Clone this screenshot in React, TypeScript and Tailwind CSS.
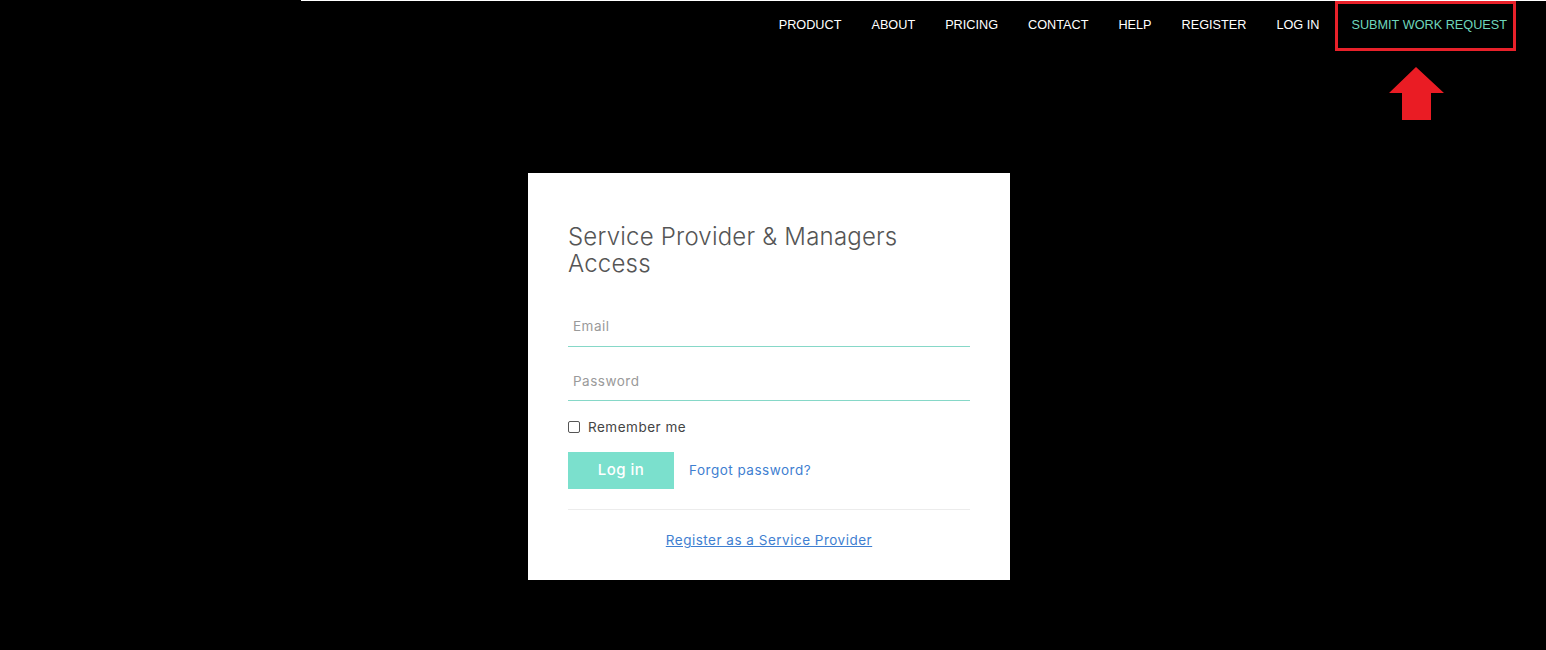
import React from "react";

export default function App() {
  const nav = ["PRODUCT", "ABOUT", "PRICING", "CONTACT", "HELP", "REGISTER", "LOG IN"];
  return (
    <div className="relative w-[1546px] h-[650px] bg-black overflow-hidden" style={{ fontFamily: "Inter, 'Open Sans', sans-serif" }}>
      <div className="ml-[301px] h-px bg-white" />
      <header className="flex justify-end items-start h-[50px] pr-[30px]" style={{ fontFamily: "'Liberation Sans', Arial, sans-serif" }}>
        <nav className="flex items-center gap-[30px] text-[12.7px] text-white">
          {nav.map((n) => (
            <a key={n} className="leading-none -mt-[1px]">{n}</a>
          ))}
          <a className="-ml-[14px] flex items-center h-[50px] border-[3px] border-[#e8212a] pl-[13px] pr-[6px] pb-[1px] text-[#6fd6bb] leading-none">
            SUBMIT WORK REQUEST
          </a>
        </nav>
      </header>
      <svg className="absolute left-[1389px] top-[67px]" width="56" height="54" viewBox="0 0 56 54">
        <polygon points="27,0 55,26 42,26 42,53 13,53 13,26 0,26" fill="#ea1c24" />
      </svg>

      <div className="flex justify-center mt-[122px]">
        <div className="w-[482px] h-[407px] bg-white ml-[-8px] px-[40px] pt-[50px]">
          <h1 className="text-[24px] leading-[27px] font-light text-[#555] tracking-[0.2px]">
            Service Provider &amp; Managers<br />Access
          </h1>
          <div className="text-[13.5px] tracking-[0.5px]">
            <div className="mt-[41px] border-b border-[#86d8c8] leading-[16px] pb-[12px] pl-[5px] text-[#9a9a9a]">
              Email
            </div>
            <div className="mt-[26px] border-b border-[#86d8c8] leading-[16px] pb-[11px] pl-[5px] text-[#9a9a9a]">
              Password
            </div>
            <label className="flex items-center gap-[8px] mt-[18px] leading-[16px] text-[#444]">
              <span className="w-[12px] h-[12px] border border-[#555] rounded-[2px]" />
              Remember me
            </label>
            <div className="flex items-center mt-[17px] gap-[15px]">
              <button className="w-[106px] h-[37px] bg-[#7be0cd] text-white text-[15px] font-medium">Log in</button>
              <a className="text-[#3f7fd1]">Forgot password?</a>
            </div>
            <div className="mt-[20px] border-t border-[#ececec]" />
            <div className="text-center mt-[22px] leading-[16px]">
              <a className="text-[#3f7fd1] underline">Register as a Service Provider</a>
            </div>
          </div>
        </div>
      </div>
    </div>
  );
}
